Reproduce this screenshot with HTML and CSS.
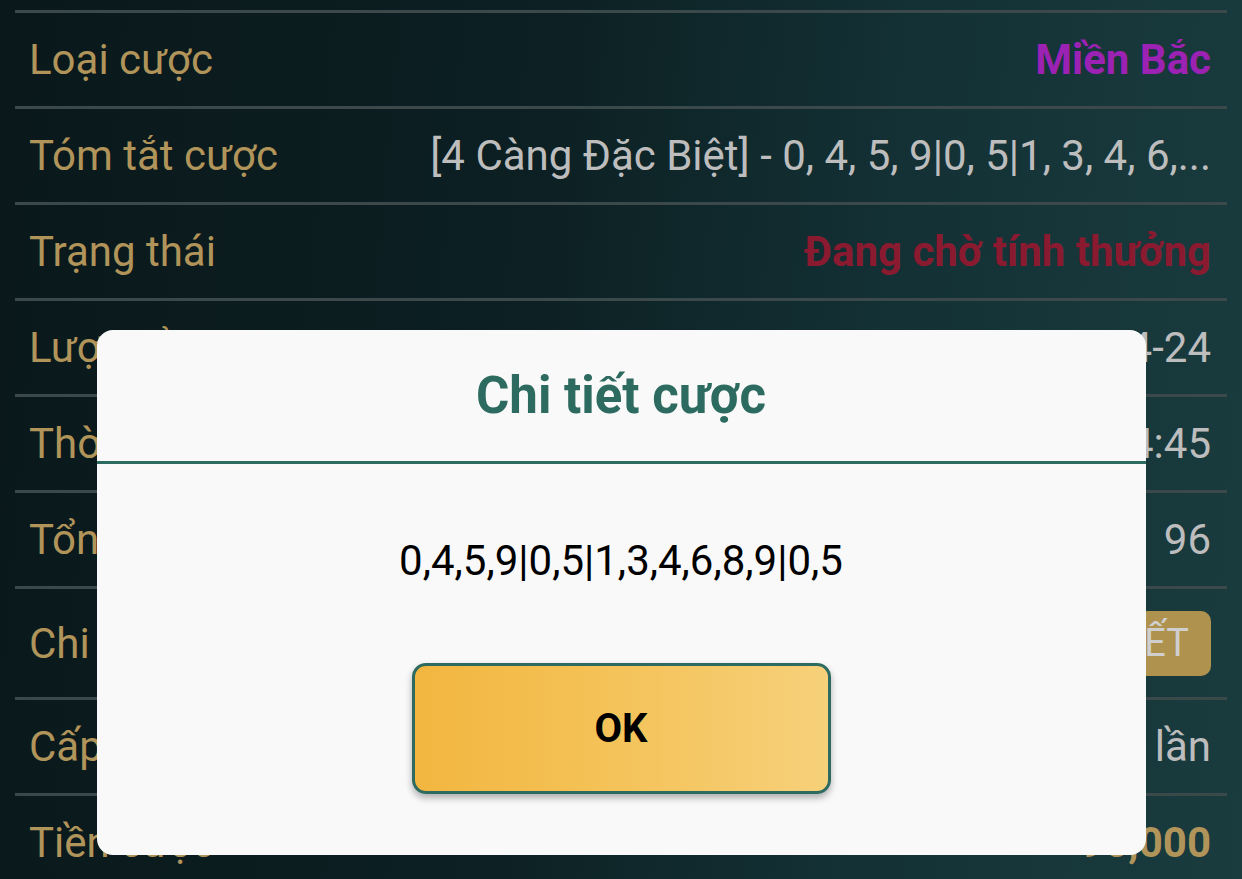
FILE: index.html
```html
<!DOCTYPE html>
<html lang="vi">
<head>
<meta charset="utf-8">
<title>Chi tiết cược</title>
<link rel="stylesheet" href="styles.css">
</head>
<body>
<div class="page">
  <div class="list">
    <div class="row">
      <span class="label">Loại cược</span>
      <span class="value purple">Miền Bắc</span>
    </div>
    <div class="row">
      <span class="label">Tóm tắt cược</span>
      <span class="value gray ellipsis">[4 Càng Đặc Biệt] - 0, 4, 5, 9|0, 5|1, 3, 4, 6,...</span>
    </div>
    <div class="row">
      <span class="label">Trạng thái</span>
      <span class="value red">Đang chờ tính thưởng</span>
    </div>
    <div class="row">
      <span class="label">Lượt xổ</span>
      <span class="value gray">2024-04-24</span>
    </div>
    <div class="row">
      <span class="label">Thời gian</span>
      <span class="value gray">2024-04-24 18:14:45</span>
    </div>
    <div class="row">
      <span class="label">Tổng số cược</span>
      <span class="value gray">96</span>
    </div>
    <div class="row row-btn">
      <span class="label">Chi tiết</span>
      <span class="detail-btn">CHI TIẾT</span>
    </div>
    <div class="row">
      <span class="label">Cấp số nhân</span>
      <span class="value gray">1 lần</span>
    </div>
    <div class="row">
      <span class="label">Tiền cược</span>
      <span class="value gold">96,000</span>
    </div>
  </div>
</div>

<div class="overlay">
  <div class="dialog">
    <div class="dialog-head">Chi tiết cược</div>
    <div class="dialog-body">
      <div class="dialog-text">0,4,5,9|0,5|1,3,4,6,8,9|0,5</div>
      <button class="ok-btn">OK</button>
    </div>
  </div>
</div>
</body>
</html>
```

FILE: styles.css
```css
* { box-sizing: border-box; }

html, body {
  margin: 0;
  padding: 0;
  height: 100%;
  overflow: hidden;
}

body {
  font-family: Roboto, "Noto Sans", "Liberation Sans", sans-serif;
  background: linear-gradient(95deg, #0a181b 0%, #0c1f22 40%, #143236 72%, #1a3c3f 100%);
}

.page {
  height: 879px;
  overflow: hidden;
}

.list {
  padding: 10px 15px 0 15px;
}

.row {
  display: flex;
  align-items: center;
  justify-content: space-between;
  gap: 24px;
  height: 96px;
  border-top: 3px solid #3b494b;
  padding: 0 16px 0 14px;
  font-size: 42px;
}

.row-btn {
  height: 111px;
}

.label {
  color: #b1945a;
  white-space: nowrap;
  flex: none;
}

.value {
  white-space: nowrap;
  text-align: right;
  min-width: 0;
}

.ellipsis {
  overflow: hidden;
  text-overflow: ellipsis;
}

.gray { color: #bdbdbd; }
.purple { color: #9c22b4; font-weight: 700; }
.red { color: #8a1a30; font-weight: 700; }
.gold { color: #b1945a; font-weight: 700; }

.detail-btn {
  background: #b0924f;
  color: #cfcfcf;
  border-radius: 10px;
  height: 65px;
  padding: 0 22px;
  display: flex;
  align-items: center;
  font-size: 38px;
}

.overlay {
  position: fixed;
  inset: 0;
  display: flex;
  justify-content: center;
  align-items: flex-start;
  padding-top: 330px;
}

.dialog {
  width: 1049px;
  height: 525px;
  background: #f9f9f9;
  border-radius: 16px;
  display: flex;
  flex-direction: column;
}

.dialog-head {
  height: 134px;
  display: flex;
  align-items: center;
  justify-content: center;
  border-bottom: 3px solid #2d6a5f;
  color: #2d6a5f;
  font-weight: 700;
  font-size: 51px;
}

.dialog-body {
  display: flex;
  flex-direction: column;
  align-items: center;
  padding-top: 72px;
}

.dialog-text {
  font-size: 42px;
  color: #000;
}

.ok-btn {
  margin-top: 78px;
  width: 419px;
  height: 131px;
  border: 3px solid #2d6a5f;
  border-radius: 14px;
  background: linear-gradient(90deg, #f2b63f 0%, #f4c257 45%, #f6d07a 100%);
  box-shadow: 0 4px 7px rgba(0, 0, 0, 0.3);
  font-family: Roboto, "Noto Sans", "Liberation Sans", sans-serif;
  font-weight: 700;
  font-size: 40px;
  color: #000;
  padding: 0;
}
```
